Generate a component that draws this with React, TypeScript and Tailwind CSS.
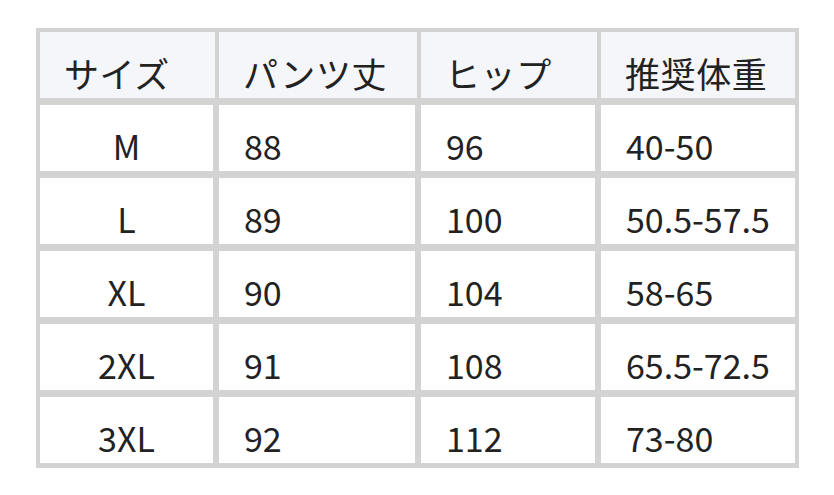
import React from "react";

const header = ["サイズ", "パンツ丈", "ヒップ", "推奨体重"];
const rows = [
  ["M", "88", "96", "40-50"],
  ["L", "89", "100", "50.5-57.5"],
  ["XL", "90", "104", "58-65"],
  ["2XL", "91", "108", "65.5-72.5"],
  ["3XL", "92", "112", "73-80"],
];

export default function App() {
  return (
    <div
      className="w-[834px] h-[495px] bg-white pt-[28px] pl-[36px]"
      style={{ fontFamily: '"Noto Sans CJK JP", "Noto Sans", sans-serif' }}
    >
      <div className="w-[763px] h-[440px] bg-[#d3d3d3] p-[4px] flex flex-col gap-[7px] text-[#222]">
        <div className="grid grid-cols-[175px_198px_176px_194px] gap-[4px] h-[66px]">
          {header.map((h) => (
            <div key={h} className="bg-[#f5f6fa] pl-[24px] pt-[23px] text-[35px] leading-[35px] tracking-[0.6px]">
              {h}
            </div>
          ))}
        </div>
        {rows.map((r, i) => (
          <div key={i} className="grid grid-cols-[173px_196px_174px_194px] gap-[6px] h-[66px]">
            {r.map((c, j) => (
              <div
                key={j}
                className={`bg-white pt-[24px] text-[34px] leading-[34px] ${j === 0 ? "text-center" : "pl-[25px]"}`}
              >
                {c}
              </div>
            ))}
          </div>
        ))}
      </div>
    </div>
  );
}
